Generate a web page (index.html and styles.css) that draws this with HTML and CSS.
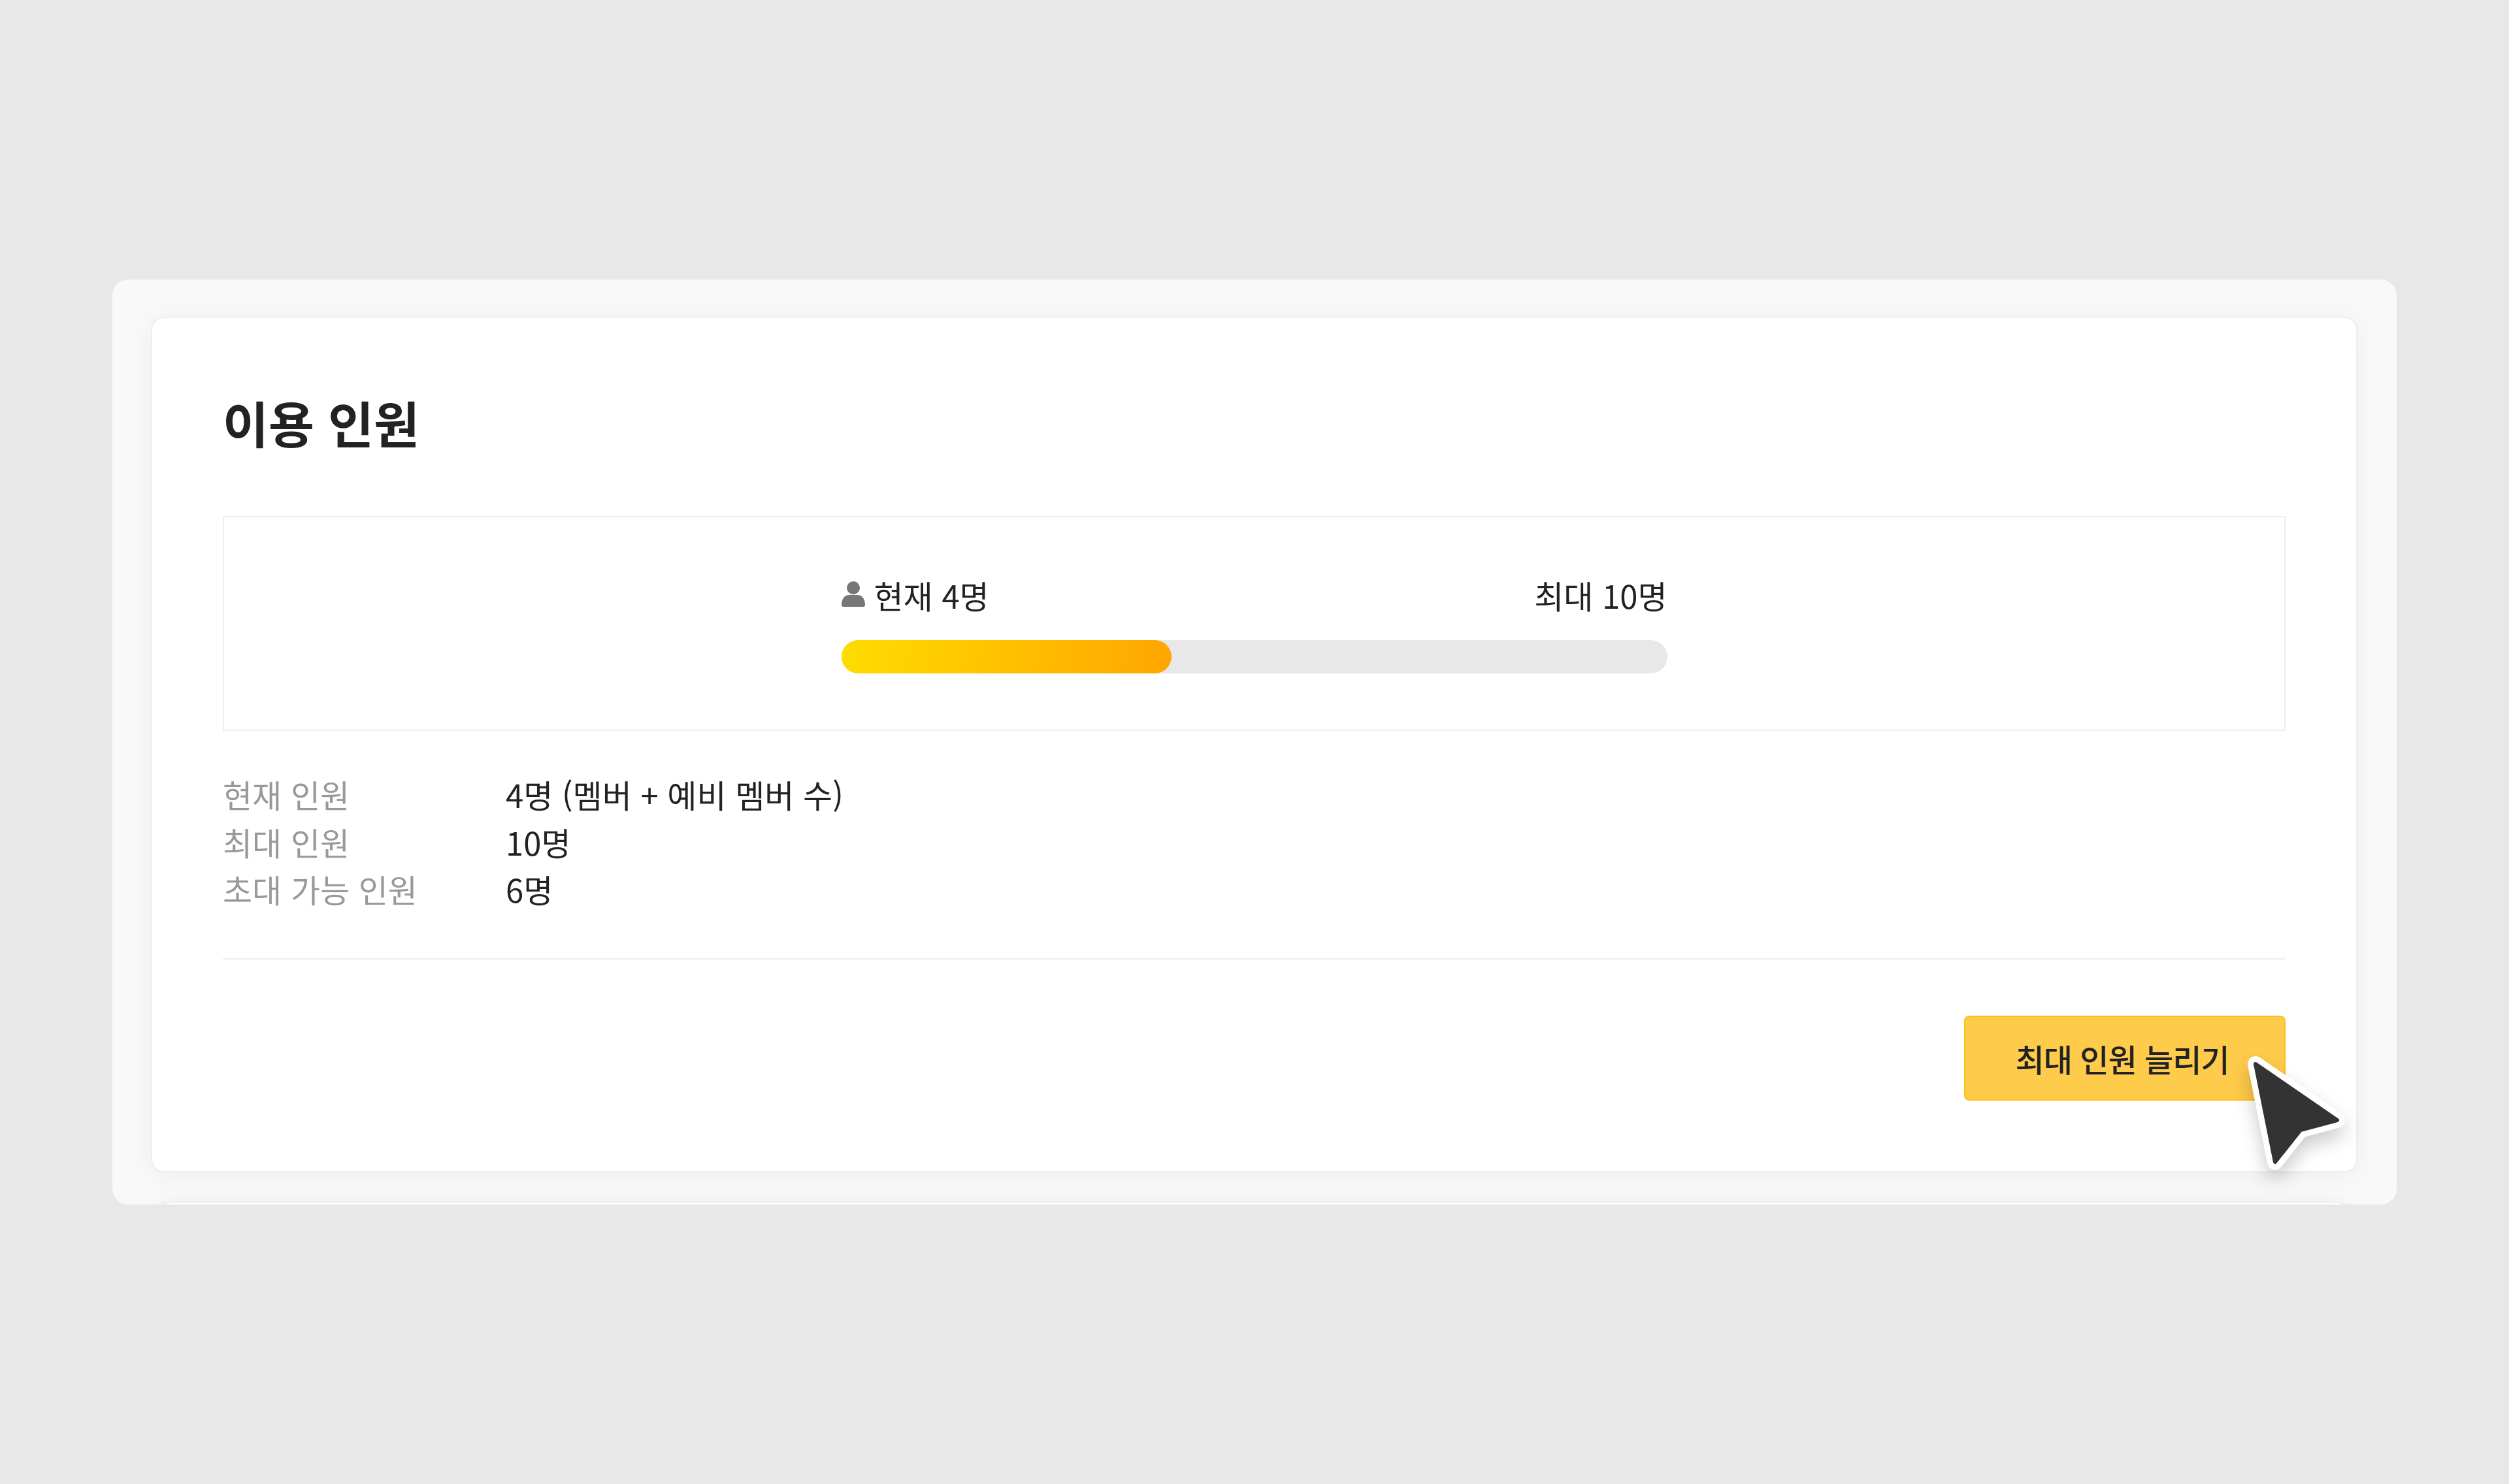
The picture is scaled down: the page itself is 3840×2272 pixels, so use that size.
FILE: index.html
```html
<!DOCTYPE html>
<html lang="ko">
<head>
  <meta charset="UTF-8" />
  <title>이용 인원</title>
  <link rel="stylesheet" href="styles.css">
</head>
<body>
  <div class="panel">
    <div class="card">
      <h1 class="title">이용 인원</h1>

      <div class="usage-box">
        <div class="usage">
          <div class="usage-labels">
            <span class="usage-now">
              <svg class="person" viewBox="0 0 36 40" width="36" height="40">
                <ellipse cx="18" cy="10" rx="10" ry="10" />
                <path d="M0 36c0-9 5-15 11-15h14c6 0 11 6 11 15 0 2-1 3-3 3H3c-2 0-3-1-3-3z" />
              </svg>
              현재 4명
            </span>
            <span>최대 10명</span>
          </div>
          <div class="bar"><div class="bar-fill"></div></div>
        </div>
      </div>

      <dl class="info">
        <dt>현재 인원</dt><dd>4명 (멤버 + 예비 멤버 수)</dd>
        <dt>최대 인원</dt><dd>10명</dd>
        <dt>초대 가능 인원</dt><dd>6명</dd>
      </dl>

      <div class="actions">
        <button class="btn">최대 인원 늘리기</button>
        <svg class="cursor" viewBox="0 0 170 200" width="170" height="200">
          <path class="cursor-line" d="M22 22L147 108L91 123L52 172z" />
          <path class="cursor-fill" d="M22 22L147 108L91 123L52 172z" />
        </svg>
      </div>
    </div>
    <div class="card-next"></div>
  </div>
</body>
</html>
```

FILE: styles.css
```css
* {
  margin: 0;
  padding: 0;
  box-sizing: border-box;
}
html, body {
  height: 100%;
  overflow: hidden;
}
body {
  background: #e8e8e8;
  font-family: "Noto Sans CJK KR", "Noto Sans", sans-serif;
  color: #222;
  padding-top: 428px;
}
.panel {
  width: 3496px;
  height: 1416px;
  margin-left: 172px;
  padding-top: 57px;
  background: #f9f9f9;
  border-radius: 24px;
  overflow: hidden;
}
.card {
  height: 1310px;
  margin: 0 60px 0 59px;
  padding: 96px 108px 0;
  background: #fff;
  border: 2px solid #eee;
  border-radius: 20px;
  box-shadow: 0 4px 40px rgba(0, 0, 0, 0.05);
}
.title {
  font-size: 76px;
  line-height: 126px;
  font-weight: 700;
  margin-bottom: 81px;
}
.usage-box {
  height: 329px;
  padding-top: 84px;
  border: 2px solid #eee;
}
.usage {
  width: 1264px;
  margin: 0 auto;
}
.usage-labels {
  display: flex;
  justify-content: space-between;
  font-size: 49px;
  line-height: 70px;
  margin-bottom: 34px;
}
.usage-now {
  display: flex;
  align-items: center;
  gap: 14px;
}
.person {
  fill: #777;
  margin-bottom: 2px;
}
.bar {
  height: 51px;
  background: #e8e8e8;
  border-radius: 26px;
}
.bar-fill {
  width: 40%;
  height: 100%;
  border-radius: 26px;
  background: linear-gradient(95deg, #ffdc00, #ffa500);
}
.info {
  display: grid;
  grid-template-columns: 433px 1fr;
  margin: 61px 0 69px;
  font-size: 49px;
  line-height: 72.5px;
}
.info dt {
  color: #999;
}
.actions {
  position: relative;
  display: flex;
  justify-content: flex-end;
  border-top: 2px solid #eee;
  padding-top: 86px;
}
.btn {
  width: 492px;
  height: 130px;
  background: #ffcb4a;
  border: 2px solid #ffbe14;
  border-radius: 8px;
  font-family: inherit;
  font-size: 48px;
  font-weight: 500;
  letter-spacing: -1px;
  color: #222;
  padding-right: 8px;
}
.cursor {
  position: absolute;
  right: -102px;
  top: 138px;
  filter: drop-shadow(0 14px 14px rgba(0, 0, 0, 0.2));
}
.cursor-line {
  fill: #fff;
  stroke: #fff;
  stroke-width: 24;
  stroke-linejoin: round;
}
.cursor-fill {
  fill: #333;
  stroke: #333;
  stroke-width: 6;
  stroke-linejoin: round;
}
.card-next {
  height: 60px;
  margin: 45px 73px 0 70px;
  background: #fff;
  border: 2px solid #eee;
  border-radius: 16px;
  box-shadow: 0 0 30px rgba(0, 0, 0, 0.05);
}
```
